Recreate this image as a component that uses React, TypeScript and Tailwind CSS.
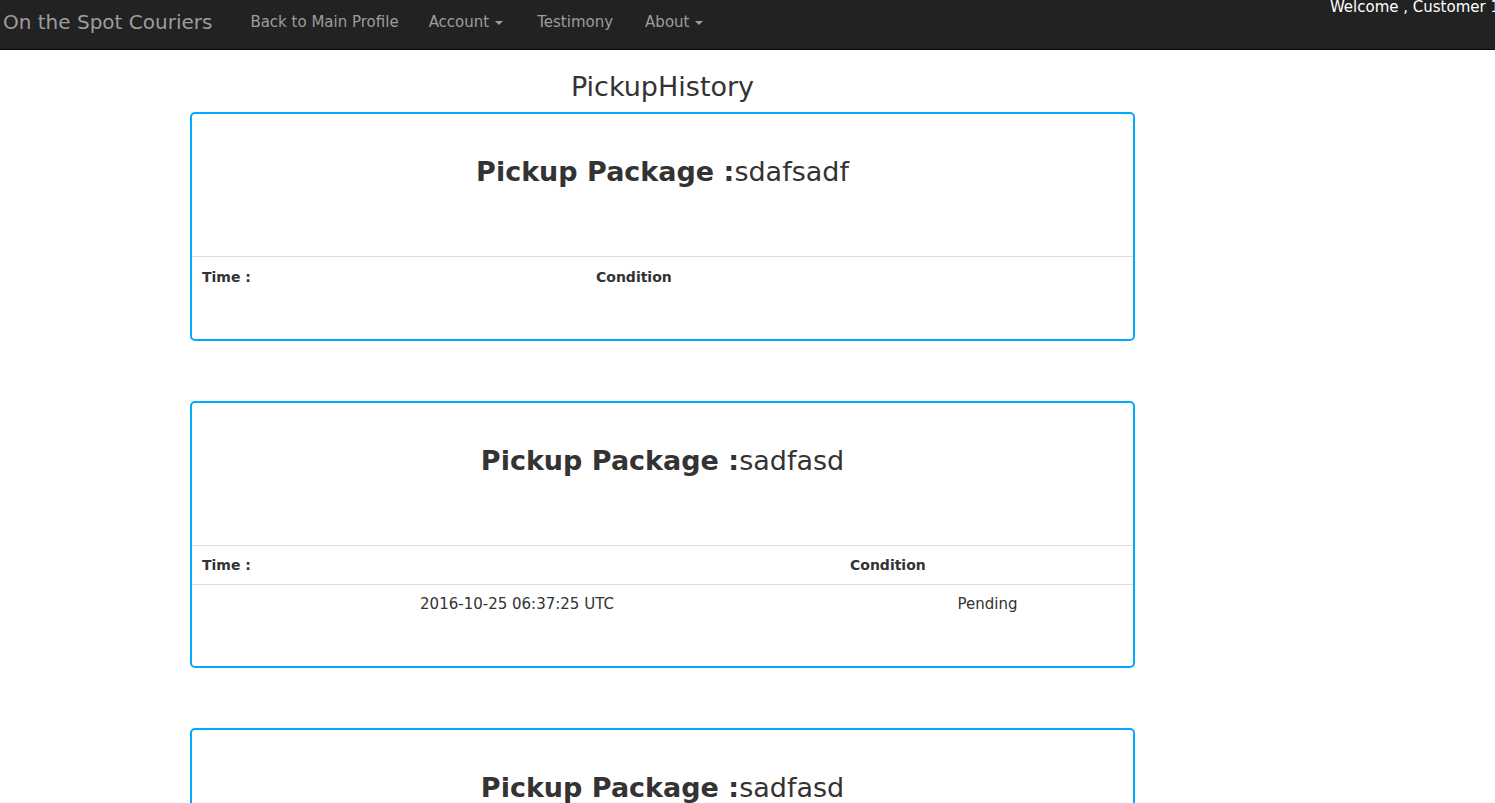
import React from 'react';

type Pickup = {
  name: string;
  timeWidth: string;
  rows: { time: string; condition: string }[];
};

const pickups: Pickup[] = [
  { name: 'sdafsadf', timeWidth: 'w-[396px]', rows: [] },
  { name: 'sadfasd', timeWidth: 'w-[650px]', rows: [{ time: '2016-10-25 06:37:25 UTC', condition: 'Pending' }] },
  { name: 'sadfasd', timeWidth: 'w-[650px]', rows: [] },
];

const Caret = () => (
  <span className="inline-block ml-[6px] align-middle w-0 h-0 border-x-[4px] border-x-transparent border-t-[4px] border-t-[#9d9d9d]" />
);

const PickupCard = ({ p }: { p: Pickup }) => (
  <div className="border-2 border-[#00aaff] rounded-[5px] bg-white pb-[43px]">
    <h2 className="text-center text-[27px] text-[#333] pt-[40px] h-[142px] leading-[36px]">
      <b>Pickup Package :</b>
      {p.name}
    </h2>
    <table className="w-full border-collapse text-[#333]">
      <thead>
        <tr className="border-t border-[#ddd] text-[14px]">
          <th className={`${p.timeWidth} text-left font-bold pl-[10px] pr-[8px] h-[39px] pt-[2px]`}>Time :</th>
          <th className="text-left font-bold px-[8px] h-[39px] pt-[2px]">Condition</th>
        </tr>
      </thead>
      <tbody>
        {p.rows.map((r, i) => (
          <tr key={i} className="border-t border-[#ddd] text-[15px]">
            <td className="text-center px-[8px] h-[39px]">{r.time}</td>
            <td className="text-center px-[8px] h-[39px]">{r.condition}</td>
          </tr>
        ))}
      </tbody>
    </table>
  </div>
);

export default function App() {
  return (
    <div className="min-h-screen bg-white font-['DejaVu_Sans',Verdana,sans-serif] overflow-hidden">
      {/* navbar */}
      <nav className="h-[50px] bg-[#222] border-b border-[#080808] flex items-start relative">
        <a className="text-[20px] text-[#9d9d9d] pl-[3px] pr-[38px] leading-[44px]">On the Spot Couriers</a>
        <ul className="flex text-[15px] text-[#9d9d9d] leading-[44px]">
          <li className="pr-[30px]">Back to Main Profile</li>
          <li className="pr-[34px]">Account<Caret /></li>
          <li className="pr-[32px]">Testimony</li>
          <li>About<Caret /></li>
        </ul>
        <span className="absolute right-[-5px] top-[-3px] text-white text-[15px] leading-[20px] whitespace-nowrap">
          Welcome , Customer 1
        </span>
      </nav>

      <div className="ml-[190px] w-[945px]">
        <h1 className="text-center text-[27px] text-[#333] leading-[30px] mt-[22px] mb-[10px]">PickupHistory</h1>
        <div className="flex flex-col gap-[60px]">
          {pickups.map((p, i) => (
            <PickupCard key={i} p={p} />
          ))}
        </div>
      </div>
    </div>
  );
}
